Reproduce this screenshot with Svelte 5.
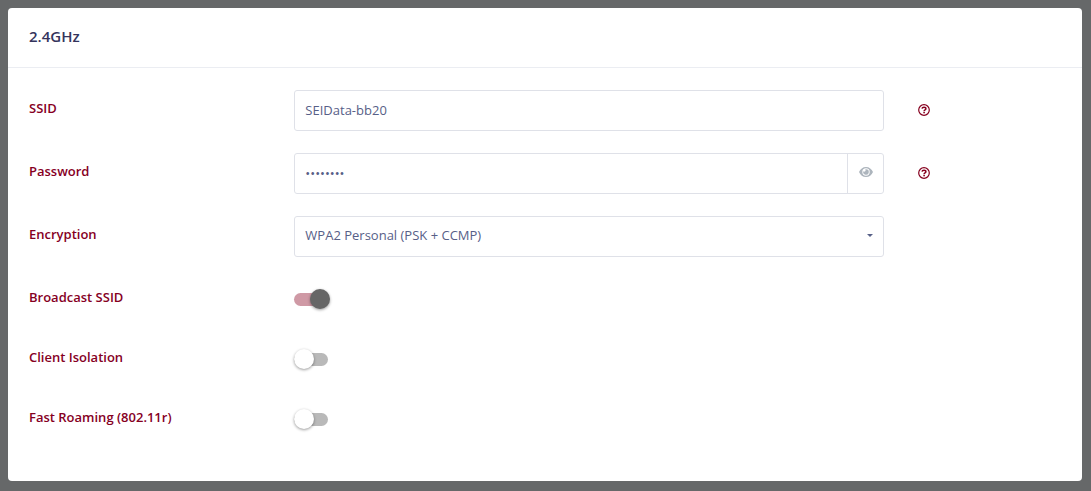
<script lang="ts">
	let ssid = $state('SEIData-bb20');
	let password = $state('password');
	let encryption = $state('psk2+ccmp');
	let showPassword = $state(false);

	const encryptionModes = [
		{ value: 'none', label: 'No Encryption' },
		{ value: 'psk2+ccmp', label: 'WPA2 Personal (PSK + CCMP)' },
		{ value: 'wpa2+ccmp', label: 'WPA2 Enterprise (CCMP)' }
	];

	let toggles = $state([
		{ id: 'broadcast', label: 'Broadcast SSID', enabled: true },
		{ id: 'isolation', label: 'Client Isolation', enabled: false },
		{ id: 'roaming', label: 'Fast Roaming (802.11r)', enabled: false }
	]);
</script>

{#snippet help(title: string)}
	<button type="button" class="help" aria-label={title}>
		<svg viewBox="0 0 12 12" width="12" height="12" aria-hidden="true">
			<circle cx="6" cy="6" r="5.3" fill="none" stroke="currentColor" stroke-width="1.2" />
			<path
				d="M4 4.7C4.2 3.6 5 3.2 6 3.2c1.2 0 1.9.7 1.9 1.5C7.9 5.8 6.1 5.9 6.1 7.1"
				fill="none"
				stroke="currentColor"
				stroke-width="1.5"
			/>
			<rect x="5.3" y="7.7" width="1.6" height="1.6" fill="currentColor" />
		</svg>
	</button>
{/snippet}

<form class="card">
	<header class="card-header">
		<h2>2.4GHz</h2>
	</header>
	<div class="card-body">
		<div class="row">
			<label for="ssid">SSID</label>
			<input id="ssid" class="control" type="text" bind:value={ssid} />
			{@render help('About the SSID')}
		</div>

		<div class="row">
			<label for="password">Password</label>
			<div class="control group">
				<input
					id="password"
					type={showPassword ? 'text' : 'password'}
					autocomplete="off"
					bind:value={password}
				/>
				<button
					type="button"
					class="reveal"
					aria-label="Show password"
					onclick={() => (showPassword = !showPassword)}
				>
					<svg viewBox="0 0 14 10" width="14" height="10" aria-hidden="true">
						<path
							fill-rule="evenodd"
							fill="currentColor"
							d="M7 0C3.8 0 1.3 2 0 5c1.3 3 3.8 5 7 5s5.7-2 7-5C12.7 2 10.2 0 7 0zM7 1.3a3.7 3.7 0 1 1 0 7.4 3.7 3.7 0 0 1 0-7.4z"
						/>
						<path
							fill="currentColor"
							d="M7 2.2a2.8 2.8 0 1 1-2.7 2.1 1.3 1.3 0 0 0 1.9-1.9A2.8 2.8 0 0 1 7 2.2z"
						/>
					</svg>
				</button>
			</div>
			{@render help('About the password')}
		</div>

		<div class="row">
			<label for="encryption">Encryption</label>
			<select id="encryption" class="control" bind:value={encryption}>
				{#each encryptionModes as mode}
					<option value={mode.value}>{mode.label}</option>
				{/each}
			</select>
		</div>

		{#each toggles as toggle (toggle.id)}
			<div class="row toggle-row">
				<label for={toggle.id}>{toggle.label}</label>
				<input id={toggle.id} class="switch" type="checkbox" bind:checked={toggle.enabled} />
			</div>
		{/each}
	</div>
</form>

<style>
	:global(body) {
		background: #666869;
	}

	.card {
		margin: 8px 9px 10px 8px;
		background: #fff;
		border-radius: 4px;
		font-family: 'Open Sans', sans-serif;
		font-size: 13px;
		line-height: 20px;
		color: #576087;
		overflow: hidden;
	}

	.card-header {
		padding: 17px 21px 19px;
		border-bottom: 1px solid #ebedf2;
	}

	h2 {
		margin: 0;
		font-size: 15px;
		font-weight: 600;
		line-height: 23px;
		color: #34345c;
	}

	.card-body {
		display: grid;
		gap: 22px;
		padding: 22px 21px 44px;
	}

	.row {
		display: grid;
		grid-template-columns: 9fr 20fr 6fr;
		align-items: start;
		min-height: 41px;
	}

	.toggle-row {
		min-height: 38px;
	}

	label {
		padding-top: 8px;
		font-weight: 600;
		color: #86001f;
	}

	input,
	select {
		margin: 0;
		font: inherit;
		color: inherit;
	}

	.control {
		box-sizing: border-box;
		width: 100%;
		height: 41px;
		padding: 0 10px 1px;
		background: #fff;
		border: 1px solid #dfe1e8;
		border-radius: 3px;
	}

	.group {
		display: flex;
		padding: 0;
	}

	.group input {
		flex: 1;
		min-width: 0;
		padding: 0 10px 1px;
		background: none;
		border: 0;
	}

	.reveal {
		display: grid;
		place-items: center;
		width: 36px;
		padding: 0 0 3px;
		background: none;
		border: 0;
		border-left: 1px solid #dfe1e8;
		color: #adb5bd;
		cursor: pointer;
	}

	select.control {
		appearance: none;
		padding-bottom: 3px;
		background: #fff
			url("data:image/svg+xml,%3Csvg xmlns='http://www.w3.org/2000/svg' width='6' height='3'%3E%3Cpath d='M0 0h6L3 3z' fill='%23576087'/%3E%3C/svg%3E")
			no-repeat right 10px top 17px;
	}

	.help {
		display: flex;
		justify-self: start;
		margin-top: 14px;
		margin-left: 34px;
		padding: 0;
		background: none;
		border: 0;
		color: #86001f;
		cursor: pointer;
	}

	.switch {
		appearance: none;
		width: 34px;
		height: 13px;
		margin-top: 14px;
		border-radius: 7px;
		background: #b9b9b9;
		cursor: pointer;
	}

	.switch::before {
		content: '';
		display: block;
		width: 20px;
		height: 20px;
		margin-top: -4px;
		border-radius: 50%;
		background: #fff;
		box-shadow: 0 1px 3px rgba(0, 0, 0, 0.4);
	}

	.switch:checked {
		background: #cf99a5;
	}

	.switch:checked::before {
		margin-left: 16px;
		background: #666;
	}
</style>
